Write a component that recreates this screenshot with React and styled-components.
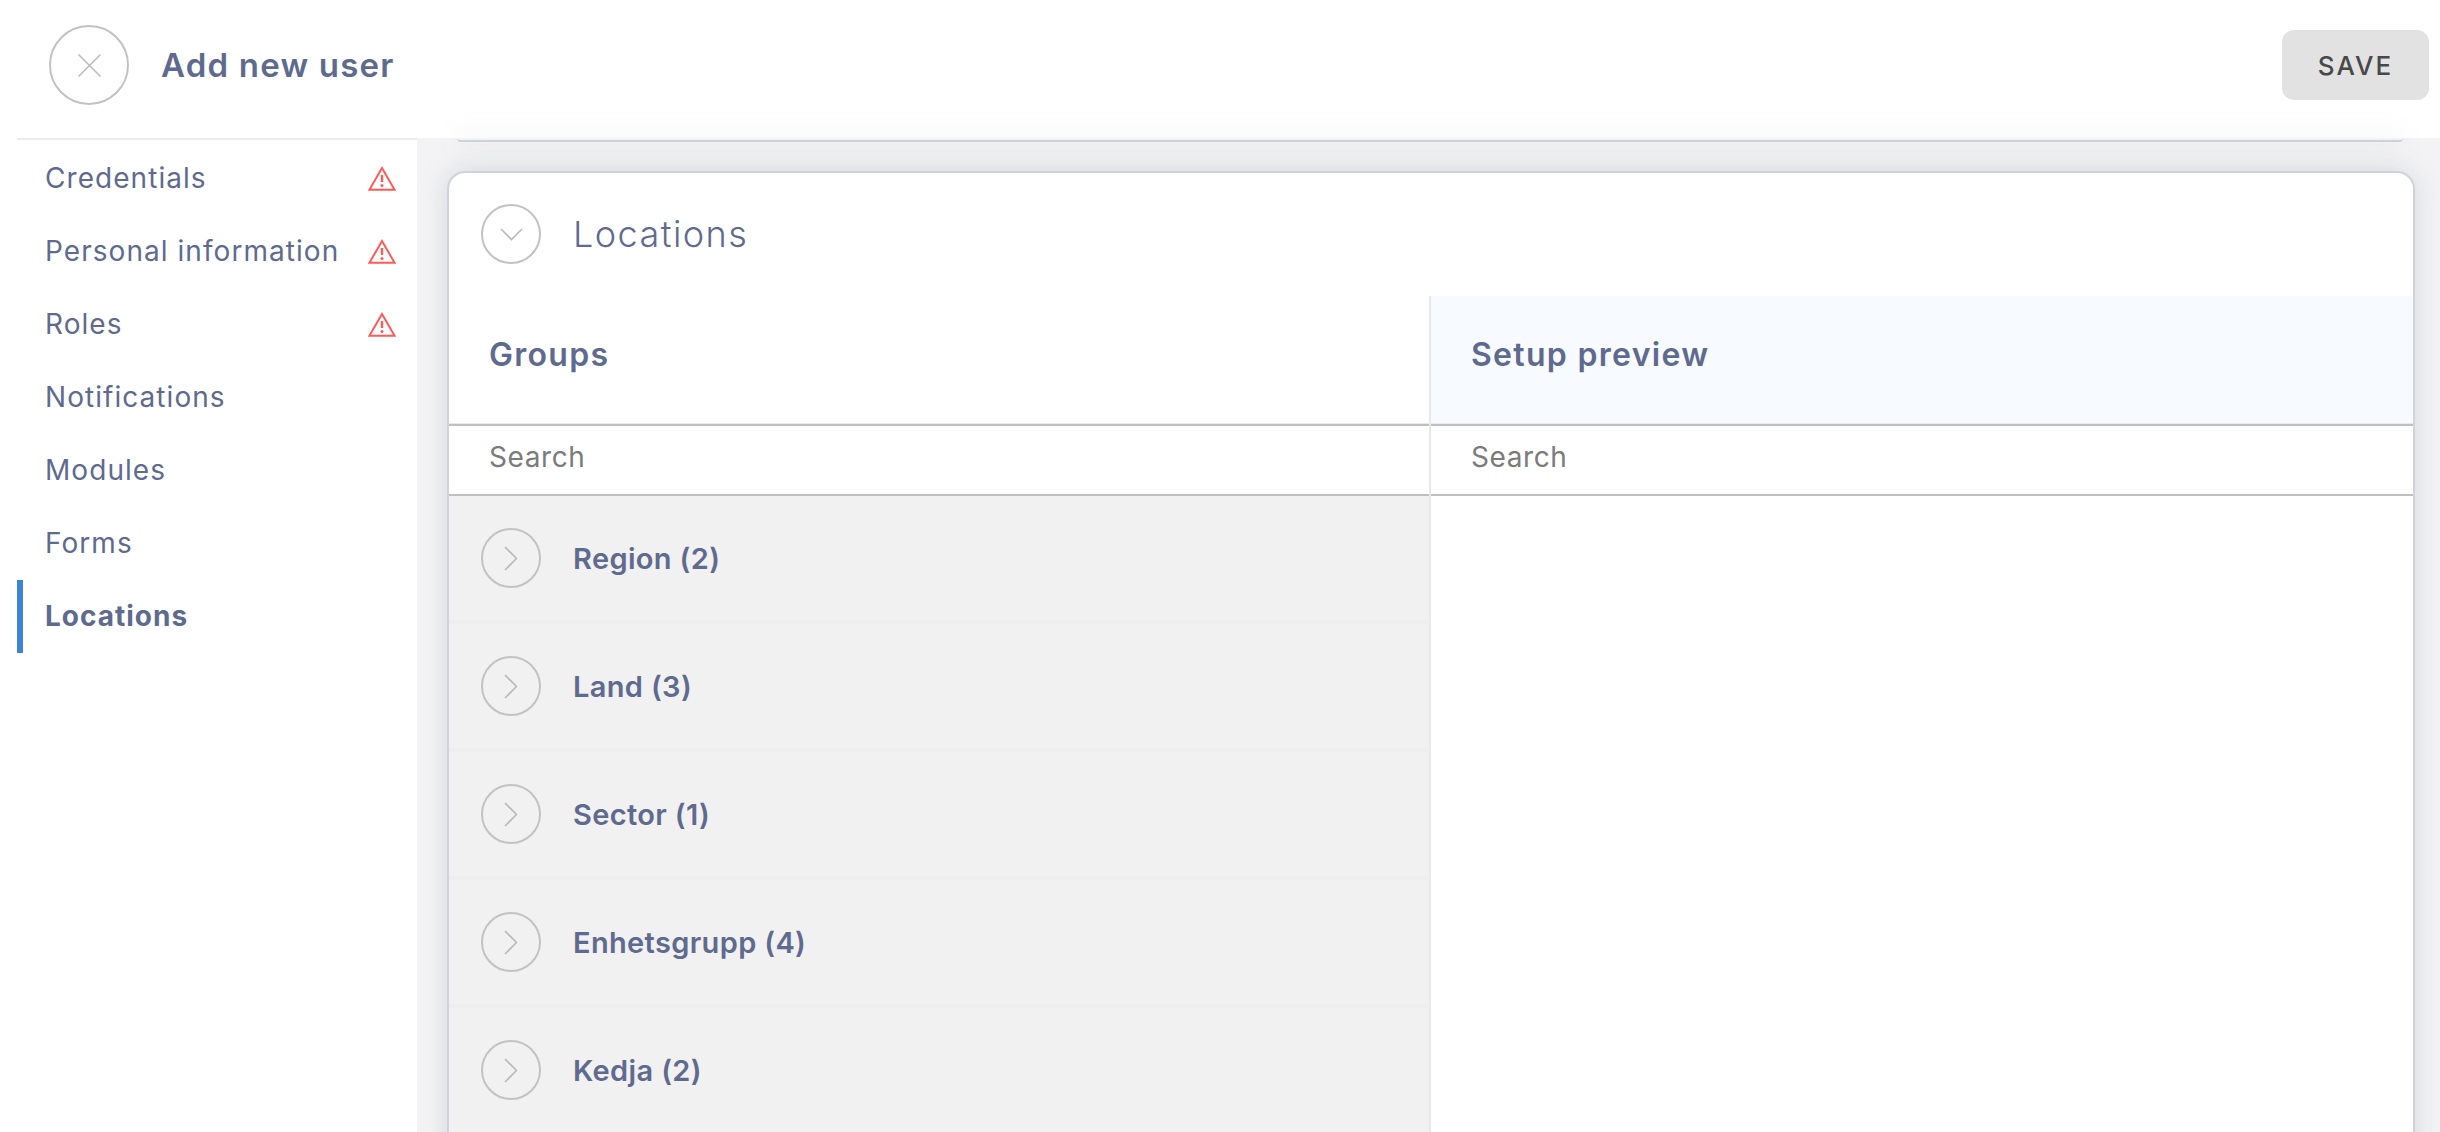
import React from 'react';
import styled, { createGlobalStyle } from 'styled-components';

const GlobalStyle = createGlobalStyle`
  html, body {
    margin: 0;
    height: 100%;
    overflow: hidden;
    background: #fff;
    font-family: Inter, "Open Sans", sans-serif;
  }
  * { box-sizing: border-box; }
`;

const Page = styled.div`
  height: 1132px;
  display: flex;
  flex-direction: column;
  overflow: hidden;
`;

const Header = styled.header`
  height: 138px;
  flex: none;
  display: flex;
  align-items: center;
  padding: 0 11px 8px 49px;
  background: #fff;
`;

const CircleButton = styled.div`
  flex: none;
  width: ${(p) => p.$size}px;
  height: ${(p) => p.$size}px;
  border: 2px solid #c2c2c2;
  border-radius: 50%;
  display: flex;
  align-items: center;
  justify-content: center;
`;

const Title = styled.h1`
  margin: 0 0 0 32px;
  font-size: 33px;
  font-weight: 600;
  letter-spacing: 1.2px;
  color: #5f6a8f;
`;

const SaveButton = styled.button`
  margin-left: auto;
  width: 147px;
  height: 70px;
  border: none;
  border-radius: 12px;
  background: #e2e2e2;
  color: #484848;
  font-family: inherit;
  font-size: 26px;
  font-weight: 500;
  letter-spacing: 2px;
`;

const Body = styled.div`
  flex: 1;
  min-height: 0;
  display: flex;
`;

const Sidebar = styled.nav`
  flex: none;
  width: 417px;
  padding-left: 17px;
  background: #fff;
`;

const NavList = styled.div`
  padding-top: 2px;
  border-top: 2px solid #ececee;
`;

const NavItem = styled.div`
  height: 73px;
  display: flex;
  align-items: center;
  padding: 0 21px 1px 22px;
  border-left: 6px solid ${(p) => (p.$active ? '#3b86d4' : 'transparent')};
  color: #5f6a8f;
  font-size: 28px;
  font-weight: ${(p) => (p.$active ? 700 : 400)};
  letter-spacing: ${(p) => (p.$active ? '1px' : '1.05px')};
`;

const WarningWrap = styled.span`
  margin-left: auto;
  display: flex;
`;

const Main = styled.main`
  flex: 1;
  min-width: 0;
  padding: 0 25px 0 30px;
  background: #f3f3f5;
`;

const PrevCard = styled.div`
  height: 4px;
  margin: 0 12px 29px 10px;
  border-bottom: 2px solid #cfd1da;
  border-radius: 0 0 12px 12px;
  box-shadow: 0 0 26px rgba(150, 155, 165, 0.32);
`;

const Card = styled.section`
  height: 1200px;
  background: #fff;
  border: 2px solid #d0d3dc;
  border-radius: 18px 18px 0 0;
  box-shadow: 0 0 26px rgba(150, 155, 165, 0.32);
`;

const CardHead = styled.div`
  height: 123px;
  display: flex;
  align-items: flex-start;
  padding: 31px 0 0 32px;
`;

const CardTitle = styled.h2`
  margin: 0 0 0 32px;
  height: 60px;
  line-height: 61px;
  font-size: 36px;
  font-weight: 300;
  letter-spacing: 1.45px;
  color: #5f6a8f;
`;

const Columns = styled.div`
  display: grid;
  grid-template-columns: 982px 1fr;
  height: 100%;
`;

const Column = styled.div`
  border-right: ${(p) => (p.$divided ? '2px solid #e8e8e8' : 'none')};
`;

const ColumnHead = styled.div`
  height: 130px;
  display: flex;
  align-items: center;
  padding: 0 40px 12px;
  background: ${(p) => p.$tint || '#fff'};
  border-bottom: 2px solid #c0c0c0;
  box-shadow: inset 0 -1px #eaeaea;
  color: #5f6a8f;
  font-size: 32px;
  font-weight: 600;
  letter-spacing: 1.3px;
`;

const SearchRow = styled.div`
  height: 70px;
  padding: 0 40px;
  border-bottom: 2px solid #c0c0c0;
  display: flex;
  align-items: center;
`;

const SearchInput = styled.input`
  width: 100%;
  border: none;
  outline: none;
  padding: 0 0 6px;
  background: transparent;
  font-family: inherit;
  font-size: 28px;
  font-weight: 400;
  letter-spacing: 0.6px;
  &::placeholder {
    color: #7b7b7b;
    opacity: 1;
  }
`;

const GroupRow = styled.div`
  height: 128px;
  display: flex;
  align-items: center;
  padding: 0 0 0 32px;
  background: #f1f1f2;
  border-bottom: 4px solid #eeeeee;
`;

const GroupName = styled.span`
  margin-left: 32px;
  color: #5f6a8f;
  font-size: 29px;
  font-weight: 600;
  letter-spacing: 0.35px;
`;

const CloseIcon = () => (
  <svg width="25" height="25" viewBox="0 0 25 25" fill="none" stroke="#b9b9b9" strokeWidth="1.5">
    <path d="M1.5 1.5 L23.5 23.5 M23.5 1.5 L1.5 23.5" />
  </svg>
);

const ChevronDown = () => (
  <svg width="23" height="13" viewBox="0 0 23 13" fill="none" stroke="#b9b9b9" strokeWidth="1.6">
    <path d="M1 1 L11.5 11.5 L22 1" />
  </svg>
);

const ChevronRight = () => (
  <svg width="14" height="25" viewBox="0 0 14 25" fill="none" stroke="#b9b9b9" strokeWidth="1.6">
    <path d="M1 1 L12.5 12.5 L1 24" />
  </svg>
);

const WarningIcon = () => (
  <svg width="28" height="25" viewBox="0 0 28 25" fill="none">
    <path d="M14 2 L26.6 23.8 H1.4 Z" stroke="#ff5a56" strokeWidth="2" />
    <path d="M14 9 V16" stroke="#ff5a56" strokeWidth="2.4" />
    <circle cx="14" cy="19.6" r="1.5" fill="#ff5a56" />
  </svg>
);

const navItems = [
  { label: 'Credentials', warning: true },
  { label: 'Personal information', warning: true },
  { label: 'Roles', warning: true },
  { label: 'Notifications' },
  { label: 'Modules' },
  { label: 'Forms' },
  { label: 'Locations', active: true },
];

const groups = ['Region (2)', 'Land (3)', 'Sector (1)', 'Enhetsgrupp (4)', 'Kedja (2)'];

const App = () => {
  return (
    <Page>
      <GlobalStyle />
      <Header>
        <CircleButton $size={80}>
          <CloseIcon />
        </CircleButton>
        <Title>Add new user</Title>
        <SaveButton>SAVE</SaveButton>
      </Header>
      <Body>
        <Sidebar>
          <NavList>
            {navItems.map((item) => (
              <NavItem key={item.label} $active={item.active}>
                {item.label}
                {item.warning && (
                  <WarningWrap>
                    <WarningIcon />
                  </WarningWrap>
                )}
              </NavItem>
            ))}
          </NavList>
        </Sidebar>
        <Main>
          <PrevCard />
          <Card>
            <CardHead>
              <CircleButton $size={60}>
                <ChevronDown />
              </CircleButton>
              <CardTitle>Locations</CardTitle>
            </CardHead>
            <Columns>
              <Column $divided>
                <ColumnHead>Groups</ColumnHead>
                <SearchRow>
                  <SearchInput placeholder="Search" />
                </SearchRow>
                {groups.map((name) => (
                  <GroupRow key={name}>
                    <CircleButton $size={60}>
                      <ChevronRight />
                    </CircleButton>
                    <GroupName>{name}</GroupName>
                  </GroupRow>
                ))}
              </Column>
              <Column>
                <ColumnHead $tint="#f7fbff">Setup preview</ColumnHead>
                <SearchRow>
                  <SearchInput placeholder="Search" />
                </SearchRow>
              </Column>
            </Columns>
          </Card>
        </Main>
      </Body>
    </Page>
  );
};

export default App;
